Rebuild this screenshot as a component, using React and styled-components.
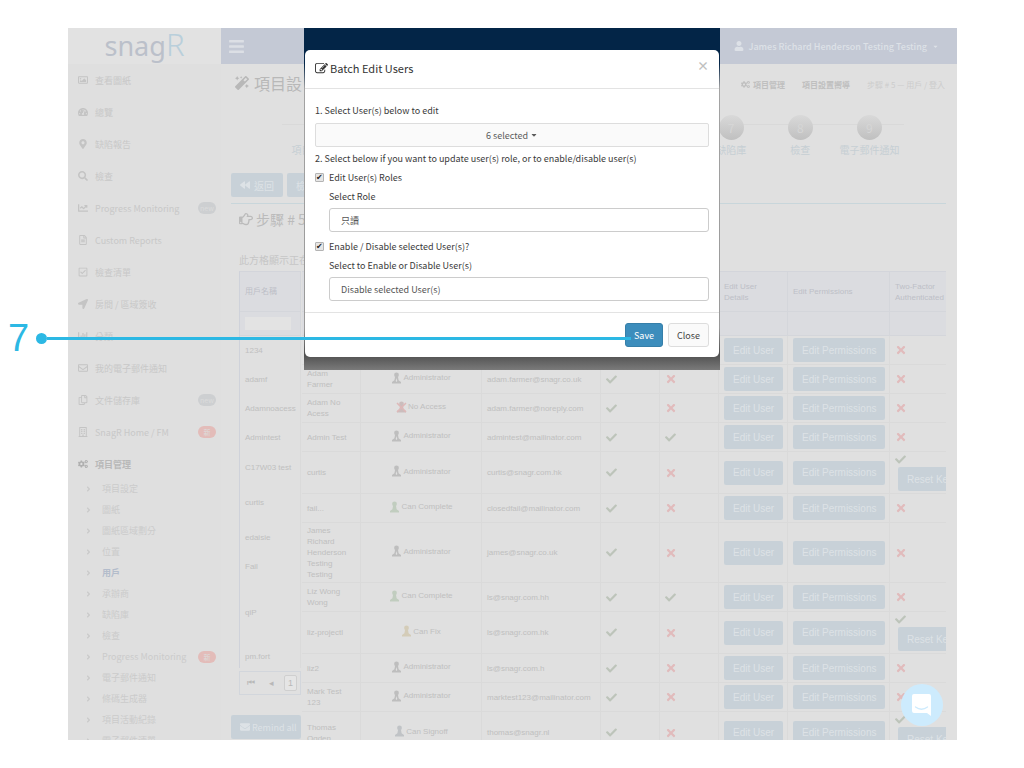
import styled, { createGlobalStyle } from 'styled-components';
import {
  FaAngleRight,
  FaBackward,
  FaBars,
  FaCaretDown,
  FaChartBar,
  FaChartLine,
  FaCheck,
  FaCogs,
  FaEnvelope,
  FaLocationArrow,
  FaMagic,
  FaMapMarkerAlt,
  FaRegBuilding,
  FaRegCheckSquare,
  FaRegCopy,
  FaRegEnvelope,
  FaRegFileAlt,
  FaRegHandPointRight,
  FaRegImage,
  FaSearch,
  FaTachometerAlt,
  FaTimes,
  FaUser,
} from 'react-icons/fa';

const GlobalStyle = createGlobalStyle`
  * {
    box-sizing: border-box;
  }
  body {
    margin: 0;
    background-color: white;
    font-family: "Noto Sans CJK TC", "Noto Sans", sans-serif;
    overflow: hidden;
  }
  button, input, select {
    font-family: inherit;
    margin: 0;
  }
`;

const Page = styled.div`
  position: relative;
  height: 100vh;
  padding: 28px 67px 28px 68px;
`;

const Frame = styled.div`
  display: flex;
  height: 100%;
  overflow: hidden;
  background-color: #e0e0e0;
`;

/* sidebar */

const Sidebar = styled.nav`
  flex: 0 0 153px;
  background-color: #dfdfdf;
`;

const Logo = styled.a`
  display: flex;
  align-items: baseline;
  justify-content: center;
  height: 36px;
  font-family: "Noto Sans", sans-serif;
  font-size: 27px;
  line-height: 32px;
  color: #bbc0ca;
  text-decoration: none;
  background-color: #e2e2e2;
`;

const LogoMark = styled.span`
  font-size: 31px;
  font-weight: 300;
  color: #b9cfdb;
`;

const Menu = styled.ul`
  list-style: none;
  margin: 0;
  padding: 0;
`;

const MenuLink = styled.a`
  display: flex;
  align-items: center;
  gap: 7px;
  height: 32px;
  padding: 0 5px 0 10px;
  font-size: 9px;
  font-weight: ${(props) => (props.$active ? 700 : 400)};
  white-space: nowrap;
  color: ${(props) => (props.$active ? '#b8b8b8' : '#c8c8c8')};
  text-decoration: none;

  svg {
    width: 10px;
    height: 10px;
    color: ${(props) => (props.$active ? '#b0b0b0' : '#c4c4c4')};
  }
`;

const SubLink = styled(MenuLink)`
  height: 21px;
  gap: 9px;
  padding-left: 16px;
  color: ${(props) => (props.$active ? '#b3bccb' : '#cbcbcb')};

  svg {
    width: 9px;
    height: 8px;
    color: #cacaca;
  }
`;

const SubMenu = styled(Menu)`
  margin-top: -2px;
`;

const Badge = styled.span`
  margin-left: auto;
  width: 18px;
  height: 12px;
  border-radius: 6px;
  font-size: 7px;
  line-height: 12px;
  text-align: center;
  color: #dcdcdc;
  background-color: ${(props) => (props.$red ? '#e3bcb9' : '#cdcfd1')};
`;

/* main column */

const Main = styled.main`
  flex: 1;
  min-width: 0;
`;

const TopBar = styled.header`
  display: flex;
  align-items: center;
  justify-content: space-between;
  height: 36px;
  padding: 0 18px 0 7px;
  color: #dcdfe5;
  background-color: #c4c9d5;
`;

const IconButton = styled.button`
  display: flex;
  padding: 0;
  border: none;
  color: #dcdfe5;
  background: none;
`;

const UserMenu = styled.button`
  display: flex;
  align-items: center;
  gap: 5px;
  padding: 0;
  border: none;
  font-size: 9px;
  font-weight: 500;
  color: #dde1e7;
  background: none;
`;

const PageHead = styled.div`
  display: flex;
  align-items: center;
  justify-content: space-between;
  height: 37px;
  padding: 0 12px 0 14px;
`;

const PageTitle = styled.h1`
  display: flex;
  align-items: center;
  gap: 5px;
  margin: 0;
  font-size: 16px;
  font-weight: 400;
  color: #b8b8b8;
`;

const Crumbs = styled.div`
  display: flex;
  gap: 17px;
  margin-top: 4px;
  font-size: 8px;
  color: #cccccc;
`;

const Crumb = styled.a`
  display: flex;
  align-items: center;
  gap: 3px;
  font-weight: 700;
  color: #bfbfbf;
  text-decoration: none;
`;

const Steps = styled.ol`
  display: flex;
  list-style: none;
  margin: 0;
  padding: 14px 53px 0 61px;
`;

const Step = styled.li`
  flex: 1;
  display: flex;
  flex-direction: column;
  align-items: center;
  height: 44px;
  font-size: 10px;
  line-height: 16px;
  white-space: nowrap;
  color: #c6cfd4;
  background: linear-gradient(#d9d9d9, #d9d9d9) 0 9px / 100% 1px no-repeat;
`;

const StepNumber = styled.span`
  width: 25px;
  height: 25px;
  margin-bottom: 2px;
  border-radius: 50%;
  font-size: 12px;
  line-height: 25px;
  text-align: center;
  color: #d6d6d6;
  background: linear-gradient(#d9d9d9, #c0c0c0);
`;

const Actions = styled.div`
  display: flex;
  gap: 4px;
  padding: 14px 10px 6px;
`;

const BlueButton = styled.button`
  display: inline-flex;
  align-items: center;
  justify-content: center;
  gap: 4px;
  height: 24px;
  padding: 0 9px;
  border: none;
  border-radius: 2px;
  font-size: 10px;
  white-space: nowrap;
  color: #dde2e6;
  background-color: #c8d1d8;

  svg {
    flex-shrink: 0;
  }
`;

const Box = styled.section`
  margin: 0 11px 0 10px;
  border-top: 1px solid #c8d6db;
  overflow: hidden;
`;

const BoxTitle = styled.h2`
  display: flex;
  align-items: center;
  gap: 3px;
  margin: 0;
  padding: 3px 8px;
  font-size: 14px;
  line-height: 24px;
  font-weight: 400;
  color: #bbbbbb;
`;

const Hint = styled.p`
  margin: 0;
  padding: 17px 8px 3px;
  font-size: 10px;
  line-height: 17px;
  color: #c6c6c6;
`;

const Grid = styled.div`
  display: flex;
  font-family: "Liberation Sans", "Noto Sans CJK TC", sans-serif;
`;

const LockedPart = styled.div`
  flex: 0 0 71px;
`;

const ScrollPart = styled.div`
  flex: 1;
  min-width: 0;
  overflow: hidden;
`;

const Table = styled.table`
  width: ${(props) => props.$width};
  table-layout: fixed;
  border-collapse: separate;
  border-spacing: 0;
  border-top: 1px solid #d3d5db;
  font-size: 8px;
  line-height: 11px;
  color: #bfbfbf;
`;

const LockedTable = styled(Table)`
  margin-left: 8px;
  border-left: 1px solid #cfd2da;
`;

const Row = styled.tr`
  height: ${(props) => props.$height || 29}px;
`;

const HeadCell = styled.th`
  height: ${(props) => (props.$filter ? 24 : 40)}px;
  padding: 0 5px;
  border-right: 1px solid #d4d6db;
  border-bottom: 1px solid #d4d6db;
  font-weight: 400;
  text-align: left;
  color: #bdbfc7;
  background-color: #dbdce0;
`;

const Cell = styled.td`
  padding: 2px 5px;
  border-right: 1px solid #dadada;
  border-bottom: ${(props) => (props.$plain ? 'none' : '1px solid #dadada')};
  text-align: ${(props) => props.$align || 'left'};
  white-space: ${(props) => (props.$nowrap ? 'nowrap' : 'normal')};

  > svg {
    display: block;
  }
`;

const FilterInput = styled.input`
  display: block;
  width: 46px;
  height: 13px;
  padding: 0 2px;
  border: none;
  font-size: 8px;
  background-color: #e3e3e3;
`;

const Role = styled.span`
  display: inline-flex;
  align-items: center;
  gap: 1px;
`;

const ResetWrap = styled.div`
  display: flex;
  padding: 2px 0 0 3px;
`;

const Pager = styled.div`
  display: flex;
  align-items: center;
  justify-content: space-around;
  height: 24px;
  margin: 3px 1px 20px 8px;
  border: 1px solid #d2d6dc;
  font-size: 9px;
`;

const PageLink = styled.button`
  height: 16px;
  padding: 0 3px;
  border: 1px solid ${(props) => (props.$current ? '#cfcfcf' : 'transparent')};
  border-radius: 2px;
  font-size: 9px;
  line-height: 12px;
  color: #b8b8b8;
  background: ${(props) => (props.$current ? '#e5e5e5' : 'none')};
`;

const RemindButton = styled(BlueButton)`
  width: 70px;
  justify-content: flex-start;
  overflow: hidden;
  font-family: "Noto Sans CJK TC", sans-serif;
  font-size: 9px;
  gap: 2px;
`;

const ChatButton = styled.button`
  position: absolute;
  right: 81px;
  bottom: 42px;
  width: 42px;
  height: 42px;
  padding: 0;
  border: none;
  border-radius: 50%;
  background-color: #cdebfd;

  svg {
    display: block;
    margin: 0 auto;
  }
`;

/* modal */

const Backdrop = styled.div`
  position: absolute;
  top: 28px;
  left: 304px;
  right: 304px;
  padding: 22px 1px 13px;
  background: linear-gradient(#032547 0 36px, #a3a3a3 60px, #999999 300px, #4e4e4e 326px, #7a7a7a);
`;

const Dialog = styled.div`
  border-radius: 5px;
  color: #3a3a3a;
  background-color: white;
  font-size: 9px;
  line-height: 19px;
`;

const DialogHead = styled.div`
  display: flex;
  justify-content: space-between;
  height: 39px;
  padding: 9px 10px 0;
  border-bottom: 1px solid #e3e3e3;
`;

const DialogTitle = styled.h3`
  display: flex;
  align-items: center;
  gap: 2px;
  height: 19px;
  margin: 0;
  font-size: 11px;
  font-weight: 400;
  color: #333333;
`;

const CloseIcon = styled.button`
  height: 14px;
  padding: 0;
  border: none;
  font-size: 12px;
  font-weight: 700;
  line-height: 14px;
  color: #c0c0c0;
  background: none;
`;

const DialogBody = styled.div`
  padding: 12px 10px 11px;
`;

const Text = styled.p`
  margin: 0;
`;

const Picker = styled.button`
  display: flex;
  align-items: center;
  justify-content: center;
  gap: 2px;
  width: 100%;
  height: 24px;
  margin: 3px 0 2px;
  border: 1px solid #dddddd;
  border-radius: 2px;
  font-size: 9px;
  color: #5c5c5c;
  background-color: #fafafa;
`;

const CheckLabel = styled.label`
  display: flex;
  align-items: center;
  gap: 5px;
`;

const Checkbox = styled.input`
  appearance: none;
  width: 9px;
  height: 9px;
  border: 1px solid #b4b4b4;
  border-radius: 1px;
  background-color: #e6e6e6;

  &:checked::before {
    content: '✔';
    display: block;
    font: 8px/7px "DejaVu Sans", sans-serif;
    color: #222222;
  }
`;

const Field = styled.div`
  padding: 0 0 5px 14px;

  &:last-child {
    padding-bottom: 0;
  }
`;

const FieldLabel = styled.label`
  display: block;
`;

const Select = styled.select`
  appearance: none;
  display: block;
  width: 100%;
  height: 24px;
  margin-top: 2px;
  padding: 0 11px;
  border: 1px solid #cccccc;
  border-radius: 3px;
  font-size: 9px;
  color: #555555;
  background-color: white;
`;

const DialogFoot = styled.div`
  display: flex;
  justify-content: flex-end;
  gap: 5px;
  padding: 10px;
  border-top: 1px solid #e3e3e3;
`;

const FootButton = styled.button`
  height: 24px;
  padding: 0 8px;
  border: 1px solid ${(props) => (props.$primary ? '#367fa9' : '#dddddd')};
  border-radius: 3px;
  font-size: 9px;
  color: ${(props) => (props.$primary ? 'white' : '#444444')};
  background-color: ${(props) => (props.$primary ? '#3c8dbc' : '#fafafa')};
`;

/* numbered pointer to the save button */

const Callout = styled.div`
  position: absolute;
  top: 318px;
  left: 8px;
  right: 393px;
  display: flex;
  align-items: center;
  height: 41px;
  color: #2cb8e4;
`;

const CalloutNumber = styled.span`
  width: 28px;
  font-family: "Liberation Sans", sans-serif;
  font-size: 38px;
  line-height: 41px;
`;

const CalloutDot = styled.span`
  width: 11px;
  height: 11px;
  border-radius: 50%;
  background-color: currentColor;
`;

const CalloutLine = styled.span`
  flex: 1;
  height: 3px;
  background-color: currentColor;
`;

const menuItems = [
  { icon: FaRegImage, text: '查看圖紙' },
  { icon: FaTachometerAlt, text: '總覽' },
  { icon: FaMapMarkerAlt, text: '缺陷報告' },
  { icon: FaSearch, text: '檢查' },
  { icon: FaChartLine, text: 'Progress Monitoring', badge: 'new' },
  { icon: FaRegFileAlt, text: 'Custom Reports' },
  { icon: FaRegCheckSquare, text: '檢查清單' },
  { icon: FaLocationArrow, text: '房間 / 區域簽收' },
  { icon: FaChartBar, text: '分類' },
  { icon: FaRegEnvelope, text: '我的電子郵件通知' },
  { icon: FaRegCopy, text: '文件儲存庫', badge: 'new' },
  { icon: FaRegBuilding, text: 'SnagR Home / FM', badge: '新', red: true },
  { icon: FaCogs, text: '項目管理', active: true },
];

const subItems = [
  { text: '項目設定' },
  { text: '圖紙' },
  { text: '圖紙區域劃分' },
  { text: '位置' },
  { text: '用戶', active: true },
  { text: '承辦商' },
  { text: '缺陷庫' },
  { text: '檢查' },
  { text: 'Progress Monitoring', badge: '新' },
  { text: '電子郵件通知' },
  { text: '條碼生成器' },
  { text: '項目活動紀錄' },
  { text: '電子郵件清單' },
];

const steps = ['項目設定檔', '', '', '', '', '', '缺陷庫', '檢查', '電子郵件通知'];

const columns = [
  { width: 59 },
  { width: 121 },
  { width: 119 },
  { width: 59 },
  { width: 59 },
  { width: 69, title: 'Edit User Details' },
  { width: 102, title: 'Edit Permissions' },
  { width: 93, title: 'Two-Factor Authenticated' },
];

const lockedRows = [
  ['1234', 29],
  ['adamf', 29],
  ['Adamnoacess', 29],
  ['Admintest', 29],
  ['C17W03 test', 30],
  ['curtis', 40],
  ['edaisie', 30],
  ['Fail', 29],
  ['qiP', 63],
  ['pm.fort', 24],
];

const users = [
  { name: '' },
  { name: 'Adam Farmer', role: 'Administrator', email: 'adam.farmer@snagr.co.uk' },
  { name: 'Adam No Acess', role: 'No Access', email: 'adam.farmer@noreply.com' },
  { name: 'Admin Test', role: 'Administrator', email: 'admintest@mailinator.com', second: true },
  { name: 'curtis', role: 'Administrator', email: 'curtis@snagr.com.hk', twoFactor: true },
  { name: 'fail...', role: 'Can Complete', email: 'closedfail@mailinator.com' },
  { name: 'James Richard Henderson Testing Testing', role: 'Administrator', email: 'james@snagr.co.uk' },
  { name: 'Liz Wong Wong', role: 'Can Complete', email: 'ls@snagr.com.hh', second: true },
  { name: 'liz-projectl', role: 'Can Fix', email: 'ls@snagr.com.hk', twoFactor: true },
  { name: 'liz2', role: 'Administrator', email: 'ls@snagr.com.h' },
  { name: 'Mark Test 123', role: 'Administrator', email: 'marktest123@mailinator.com' },
  { name: 'Thomas Ogden', role: 'Can Signoff', email: 'thomas@snagr.nl', twoFactor: true },
];

const roleColors = {
  Administrator: '#bebebe',
  'No Access': '#cbbdbd',
  'Can Complete': '#c1cdbf',
  'Can Fix': '#d4ccb8',
  'Can Signoff': '#c0c3c6',
};

const RoleIcon = ({ role }) => (
  <svg width="11" height="12" viewBox="0 0 11 12" fill={roleColors[role]}>
    <circle cx="5.5" cy="3" r="2.4" />
    <path d="M4 5h3l.6 3.2L10 10v1.5H1V10l2.4-1.8z" />
    {role === 'Administrator' && <path d="M5.5 6l.8 3-.8 1-.8-1z" fill="#e0e0e0" />}
    {role === 'No Access' && <path d="M1 2l9 9M10 2l-9 9" stroke="#deb8b8" strokeWidth="1.5" />}
  </svg>
);

const Tick = () => <FaCheck size={11} color="#bdc4ba" />;
const Cross = () => <FaTimes size={12} color="#e1bbbc" />;

const EditIcon = () => (
  <svg width="13" height="13" viewBox="0 0 1792 1792" fill="#333333">
    <path d="M888 1184l116-116-152-152-116 116v56h96v96h56zm440-720q-16-16-33 1l-350 350q-17 17-1 33t33-1l350-350q17-17 1-33zm80 594v190q0 119-84.5 203.5t-203.5 84.5h-832q-119 0-203.5-84.5t-84.5-203.5v-832q0-119 84.5-203.5t203.5-84.5h832q63 0 117 25 15 7 18 23 3 17-9 29l-49 49q-14 14-32 8-23-6-45-6h-832q-66 0-113 47t-47 113v832q0 66 47 113t113 47h832q66 0 113-47t47-113v-126q0-13 9-22l64-64q15-15 35-7t20 29zm-96-738l288 288-672 672h-288v-288zm444 132l-92 92-288-288 92-92q28-28 68-28t68 28l152 152q28 28 28 68t-28 68z" />
  </svg>
);

const SideMenu = () => (
  <Sidebar>
    <Logo href="#">
      snag<LogoMark>R</LogoMark>
    </Logo>
    <Menu>
      {menuItems.map(({ icon: Icon, text, badge, red, active }) => (
        <li key={text}>
          <MenuLink href="#" $active={active}>
            <Icon />
            {text}
            {badge && <Badge $red={red}>{badge}</Badge>}
          </MenuLink>
        </li>
      ))}
    </Menu>
    <SubMenu>
      {subItems.map(({ text, badge, active }) => (
        <li key={text}>
          <SubLink href="#" $active={active}>
            <FaAngleRight />
            {text}
            {badge && <Badge $red>{badge}</Badge>}
          </SubLink>
        </li>
      ))}
    </SubMenu>
  </Sidebar>
);

const UserGrid = () => (
  <Grid>
    <LockedPart>
      <LockedTable $width="62px">
        <thead>
          <tr>
            <HeadCell>用戶名稱</HeadCell>
          </tr>
          <tr>
            <HeadCell $filter>
              <FilterInput aria-label="用戶名稱" />
            </HeadCell>
          </tr>
        </thead>
        <tbody>
          {lockedRows.map(([name, height]) => (
            <Row key={name} $height={height}>
              <Cell $plain $nowrap>{name}</Cell>
            </Row>
          ))}
        </tbody>
      </LockedTable>
      <Pager>
        <PageLink>⏮</PageLink>
        <PageLink>◂</PageLink>
        <PageLink $current>1</PageLink>
      </Pager>
      <RemindButton>
        <FaEnvelope size={10} />
        Remind all
      </RemindButton>
    </LockedPart>
    <ScrollPart>
      <Table $width="681px">
        <colgroup>
          {columns.map(({ width }, i) => (
            <col key={i} width={width} />
          ))}
        </colgroup>
        <thead>
          <tr>
            {columns.map(({ title }, i) => (
              <HeadCell key={i}>{title}</HeadCell>
            ))}
          </tr>
          <tr>
            {columns.map((column, i) => (
              <HeadCell $filter key={i} />
            ))}
          </tr>
        </thead>
        <tbody>
          {users.map((user) => (
            <Row key={user.name}>
              <Cell>{user.name}</Cell>
              <Cell $align="center">
                {user.role && (
                  <Role>
                    <RoleIcon role={user.role} />
                    {user.role}
                  </Role>
                )}
              </Cell>
              <Cell $nowrap>{user.email}</Cell>
              <Cell><Tick /></Cell>
              <Cell>{user.second ? <Tick /> : <Cross />}</Cell>
              <Cell><BlueButton>Edit User</BlueButton></Cell>
              <Cell><BlueButton>Edit Permissions</BlueButton></Cell>
              <Cell>
                {user.twoFactor ? <Tick /> : <Cross />}
                {user.twoFactor && (
                  <ResetWrap>
                    <BlueButton>Reset Key</BlueButton>
                  </ResetWrap>
                )}
              </Cell>
            </Row>
          ))}
        </tbody>
      </Table>
    </ScrollPart>
  </Grid>
);

const BatchEditDialog = () => (
  <Backdrop>
    <Dialog role="dialog" aria-labelledby="dialog-title">
      <DialogHead>
        <DialogTitle id="dialog-title">
          <EditIcon />
          Batch Edit Users
        </DialogTitle>
        <CloseIcon aria-label="Close">×</CloseIcon>
      </DialogHead>
      <DialogBody>
        <Text>1. Select User(s) below to edit</Text>
        <Picker>
          6 selected <FaCaretDown size={8} />
        </Picker>
        <Text>2. Select below if you want to update user(s) role, or to enable/disable user(s)</Text>
        <CheckLabel>
          <Checkbox type="checkbox" defaultChecked />
          Edit User(s) Roles
        </CheckLabel>
        <Field>
          <FieldLabel htmlFor="role">Select Role</FieldLabel>
          <Select id="role">
            <option>只讀</option>
          </Select>
        </Field>
        <CheckLabel>
          <Checkbox type="checkbox" defaultChecked />
          Enable / Disable selected User(s)?
        </CheckLabel>
        <Field>
          <FieldLabel htmlFor="status">Select to Enable or Disable User(s)</FieldLabel>
          <Select id="status">
            <option>Disable selected User(s)</option>
          </Select>
        </Field>
      </DialogBody>
      <DialogFoot>
        <FootButton $primary>Save</FootButton>
        <FootButton>Close</FootButton>
      </DialogFoot>
    </Dialog>
  </Backdrop>
);

const App = () => {
  return (
    <Page>
      <GlobalStyle />
      <Frame>
        <SideMenu />
        <Main>
          <TopBar>
            <IconButton aria-label="Menu">
              <FaBars size={17} />
            </IconButton>
            <UserMenu>
              <FaUser size={10} />
              James Richard Henderson Testing Testing
              <FaCaretDown size={7} />
            </UserMenu>
          </TopBar>
          <PageHead>
            <PageTitle>
              <FaMagic size={14} />
              項目設
            </PageTitle>
            <Crumbs>
              <Crumb href="#">
                <FaCogs size={9} />
                項目管理
              </Crumb>
              <Crumb href="#">項目設置嚮導</Crumb>
              <span>步驟 # 5 — 用戶 / 登入</span>
            </Crumbs>
          </PageHead>
          <Steps>
            {steps.map((step, i) => (
              <Step key={i}>
                <StepNumber>{i > 5 && i + 1}</StepNumber>
                {step}
              </Step>
            ))}
          </Steps>
          <Actions>
            <BlueButton>
              <FaBackward size={10} />
              返回
            </BlueButton>
            <BlueButton>檢查</BlueButton>
          </Actions>
          <Box>
            <BoxTitle>
              <FaRegHandPointRight size={14} />
              步驟 # 5
            </BoxTitle>
            <Hint>此方格顯示正在</Hint>
            <UserGrid />
          </Box>
        </Main>
      </Frame>
      <ChatButton aria-label="Chat">
        <svg width="22" height="24" viewBox="0 0 22 24">
          <path d="M3 1h15a2 2 0 0 1 2 2v20l-4-3H3a2 2 0 0 1-2-2V3a2 2 0 0 1 2-2z" fill="white" />
          <path d="M4.5 14q6 4.5 12 0" fill="none" stroke="#cdebfd" strokeWidth="1.3" strokeLinecap="round" />
        </svg>
      </ChatButton>
      <BatchEditDialog />
      <Callout>
        <CalloutNumber>7</CalloutNumber>
        <CalloutDot />
        <CalloutLine />
      </Callout>
    </Page>
  );
};

export default App;
